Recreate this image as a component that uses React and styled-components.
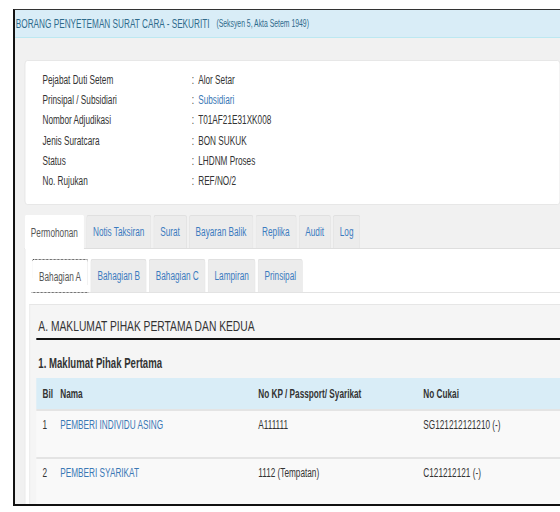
import React, { useState } from "react";
import styled, { createGlobalStyle } from "styled-components";

const GlobalStyle = createGlobalStyle`
  html, body {
    margin: 0;
    padding: 0;
    background: #fff;
    overflow: hidden;
  }
  body {
    font-family: "Liberation Sans", Arial, sans-serif;
    font-size: 12px;
    color: #333;
  }
  * { box-sizing: border-box; }
`;

// the whole page is a horizontally squeezed capture, so the stage is drawn
// at its natural width and condensed to the 560px window
const Stage = styled.div`
  width: 818px;
  transform: scaleX(0.685);
  transform-origin: 0 0;
`;

const Frame = styled.div`
  margin: 9px 0 0 19px;
  height: 497px;
  border-top: 1px solid #333;
  border-left: 3px solid #111;
  border-bottom: 2px solid #111;
  display: flex;
  flex-direction: column;
  overflow: hidden;
`;

const Header = styled.div`
  flex-shrink: 0;
  height: 28px;
  background: #d9edf7;
  border-bottom: 1px solid #bce8f1;
  display: flex;
  align-items: center;
  gap: 10px;
  padding-left: 1px;
  color: #2f6b8c;
`;

const Title = styled.span`
  font-size: 12px;
`;

const SubTitle = styled.span`
  font-size: 10px;
`;

const Body = styled.div`
  flex: 1;
  min-height: 0;
  background: #f1f1f1;
  padding: 22px 0 0 14px;
  display: flex;
  flex-direction: column;
`;

const InfoCard = styled.div`
  flex-shrink: 0;
  background: #fff;
  border: 1px solid #e3e3e3;
  border-radius: 4px;
  padding: 9px 22px 13px 25px;
  display: grid;
  grid-template-columns: 218px 1fr;
  grid-auto-rows: 20.2px;
  align-items: center;
`;

const Value = styled.div`
  color: ${(p) => (p.$link ? "#3a78b5" : "#333")};
  &::before {
    content: ":";
    margin-right: 6px;
    color: #333;
  }
`;

const TabBar = styled.div`
  flex-shrink: 0;
  display: flex;
  gap: 3px;
  margin-top: 10px;
  height: 33px;
`;

const Tab = styled.div`
  position: relative;
  z-index: ${(p) => (p.$active ? 1 : 0)};
  margin-bottom: ${(p) => (p.$active ? -1 : 0)}px;
  padding: 0 ${(p) => (p.$active ? 8 : 9)}px;
  display: flex;
  align-items: center;
  border: 1px solid ${(p) => (p.$active ? "#fff" : "#e0e0e0")};
  border-bottom: none;
  border-radius: 3px 3px 0 0;
  background: ${(p) => (p.$active ? "#fff" : "#ececec")};
  color: ${(p) => (p.$active ? "#555" : "#3b7bbf")};
  cursor: pointer;
`;

const TabPanel = styled.div`
  flex: 1;
  background: #fff;
  border-left: 1px solid #dedede;
  border-top: 1px solid #dedede;
  padding: 10px 0 0 9px;
  display: flex;
  flex-direction: column;
`;

const SubTabBar = styled.div`
  flex-shrink: 0;
  display: flex;
  gap: 3px;
  height: 34px;
  border-bottom: 1px solid #e3e3e3;
`;

const SubTab = styled(Tab)`
  padding: 0 ${(p) => (p.$active ? 10 : 9)}px;
  outline: ${(p) => (p.$active ? "1px dotted #333" : "none")};
  outline-offset: -1px;
`;

const Section = styled.div`
  flex: 1;
  margin: 11px 0 0 -3px;
  background: #f5f5f5;
  border-top: 1px solid #e6e6e6;
  border-left: 1px solid #e6e6e6;
  padding: 12px 0 0 9px;
`;

const SectionTitle = styled.h3`
  margin: 0;
  font-weight: normal;
  font-size: 15px;
  line-height: 17px;
  color: #333;
  padding: 0 0 4px 3px;
  border-bottom: 2px solid #111;
`;

const GroupTitle = styled.h4`
  margin: 0;
  padding: 16px 0 7px 3px;
  font-size: 14px;
  font-weight: bold;
  line-height: 15px;
`;

const Table = styled.div`
  display: flex;
  flex-direction: column;
`;

const Row = styled.div`
  display: grid;
  grid-template-columns: 26px 289px 241px 1fr;
  height: ${(p) => (p.$head ? 31 : 48)}px;
  align-items: ${(p) => (p.$head ? "center" : "start")};
  padding: ${(p) => (p.$head ? "0" : "7px")} 0 0 9px;
  background: ${(p) => (p.$head ? "#d9edf7" : "#f9f9f9")};
  border-top: ${(p) => (p.$head ? "none" : "2px solid #e4e4e4")};
  font-weight: ${(p) => (p.$head ? "bold" : "normal")};
  line-height: 14px;
`;

const NameLink = styled.div`
  color: #3a78b5;
`;

const info = [
  ["Pejabat Duti Setem", "Alor Setar"],
  ["Prinsipal / Subsidiari", "Subsidiari", true],
  ["Nombor Adjudikasi", "T01AF21E31XK008"],
  ["Jenis Suratcara", "BON SUKUK"],
  ["Status", "LHDNM Proses"],
  ["No. Rujukan", "REF/NO/2"],
];

const tabs = ["Permohonan", "Notis Taksiran", "Surat", "Bayaran Balik", "Replika", "Audit", "Log"];
const subTabs = ["Bahagian A", "Bahagian B", "Bahagian C", "Lampiran", "Prinsipal"];

const rows = [
  ["1", "PEMBERI INDIVIDU ASING", "A111111", "SG121212121210 (-)"],
  ["2", "PEMBERI SYARIKAT", "1112 (Tempatan)", "C121212121 (-)"],
];

export default function App() {
  const [tab, setTab] = useState(0);
  const [sub, setSub] = useState(0);

  return (
    <Stage>
      <GlobalStyle />
      <Frame>
        <Header>
          <Title>BORANG PENYETEMAN SURAT CARA - SEKURITI</Title>
          <SubTitle>(Seksyen 5, Akta Setem 1949)</SubTitle>
        </Header>
        <Body>
          <InfoCard>
            {info.map(([l, v, link]) => (
              <React.Fragment key={l}>
                <div>{l}</div>
                <Value $link={link}>{v}</Value>
              </React.Fragment>
            ))}
          </InfoCard>

          <TabBar>
            {tabs.map((t, i) => (
              <Tab key={t} $active={tab === i} onClick={() => setTab(i)}>
                {t}
              </Tab>
            ))}
          </TabBar>
          <TabPanel>
            <SubTabBar>
              {subTabs.map((t, i) => (
                <SubTab key={t} $active={sub === i} onClick={() => setSub(i)}>
                  {t}
                </SubTab>
              ))}
            </SubTabBar>
            <Section>
              <SectionTitle>A. MAKLUMAT PIHAK PERTAMA DAN KEDUA</SectionTitle>
              <GroupTitle>1. Maklumat Pihak Pertama</GroupTitle>
              <Table>
                <Row $head>
                  <div>Bil</div>
                  <div>Nama</div>
                  <div>No KP / Passport/ Syarikat</div>
                  <div>No Cukai</div>
                </Row>
                {rows.map((r) => (
                  <Row key={r[0]}>
                    <div>{r[0]}</div>
                    <NameLink>{r[1]}</NameLink>
                    <div>{r[2]}</div>
                    <div>{r[3]}</div>
                  </Row>
                ))}
              </Table>
            </Section>
          </TabPanel>
        </Body>
      </Frame>
    </Stage>
  );
}
